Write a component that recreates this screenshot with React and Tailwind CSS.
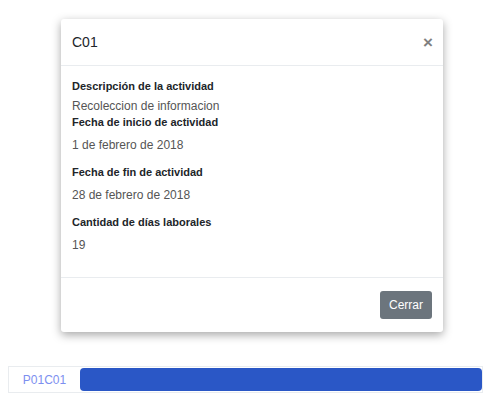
import React from 'react';

const fields = [
  { label: 'Descripción de la actividad', value: 'Recoleccion de informacion', tight: true },
  { label: 'Fecha de inicio de actividad', value: '1 de febrero de 2018' },
  { label: 'Fecha de fin de actividad', value: '28 de febrero de 2018' },
  { label: 'Cantidad de días laborales', value: '19' },
];

const App = () => {
  return (
    <div className="w-[504px] h-[407px] bg-white pt-[19px] font-['Liberation_Sans',Arial,sans-serif] text-[12px] overflow-hidden">
      <div className="ml-[61px] w-[382px] bg-white rounded-[3px] shadow-[0_3px_10px_rgba(0,0,0,0.35)]">
        <div className="flex items-center justify-between h-[47px] px-[11px] border-b border-[#e9ecef]">
          <h5 className="text-[14px] text-[#212529] leading-none">C01</h5>
          <span className="text-[17px] font-bold text-[#808080] leading-none mr-[-1px]">×</span>
        </div>
        <div className="px-[11px] pt-[11px] pb-[14px]">
          {fields.map((f) => (
            <div key={f.label}>
              <h6 className={`font-bold text-[11px] text-[#212529] leading-[18px] ${f.tight ? 'mb-[4px]' : 'mb-[5px]'}`}>{f.label}</h6>
              <p className={`text-[#555] ${f.tight ? 'leading-[14px] mb-0' : 'leading-[18px] mb-[9px]'}`}>{f.value}</p>
            </div>
          ))}
        </div>
        <div className="flex justify-end border-t border-[#e9ecef] px-[11px] py-[13px]">
          <button className="h-[28px] w-[52px] rounded-[3px] bg-[#6c757d] text-white text-[12px]">Cerrar</button>
        </div>
      </div>
      <div className="mt-[34px] ml-[8px] w-[475px] h-[27px] border border-[#e9ecef] flex items-stretch">
        <div className="w-[71px] flex items-center justify-center text-[#7d8ff0] text-[12px]">P01C01</div>
        <div className="flex-1 my-[1px] rounded-[4px] bg-[#2a57c6]" />
      </div>
    </div>
  );
};

export default App;
